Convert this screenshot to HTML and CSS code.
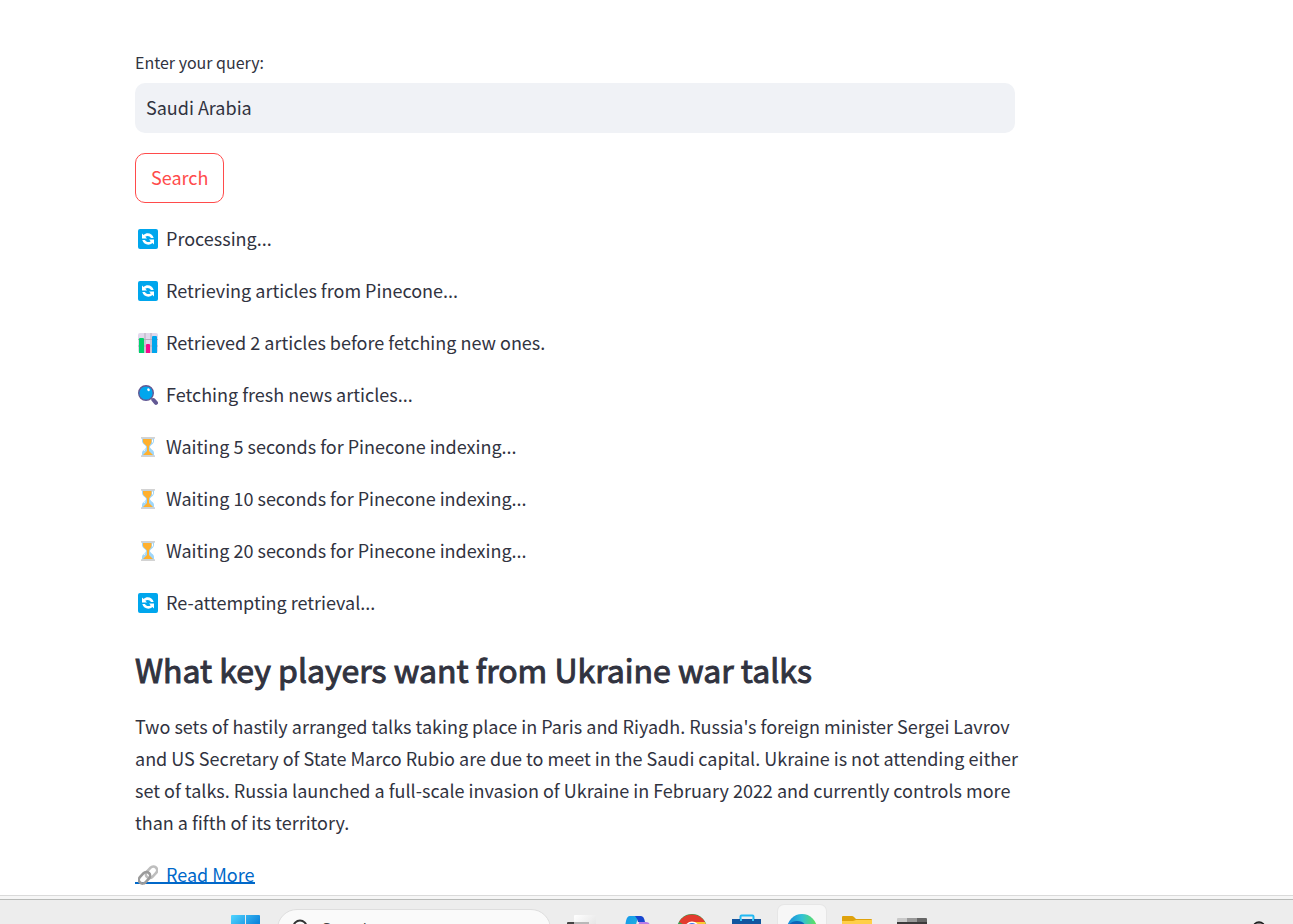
FILE: index.html
```html
<!DOCTYPE html>
<html lang="en">
<head>
<meta charset="utf-8">
<meta name="viewport" content="width=device-width, initial-scale=1">
<title>News search</title>
<link rel="stylesheet" href="styles.css">
</head>
<body>
<svg class="sprites" aria-hidden="true">
  <symbol id="refresh" viewBox="0 0 20 20">
    <rect width="20" height="20" rx="2" fill="#00a6ed"/>
    <path d="M4 4.500v5h5L7.300 7.800C9 6.300 11.800 6.600 13 9h2.700C14.500 4.500 9 2.800 5.600 6zM16 15.500v-5h-5l1.700 1.700c-1.700 1.500-4.500 1.200-5.700-1.200H4.300c1.200 4.500 6.700 6.200 10.100 3z" fill="#fff"/>
  </symbol>
  <symbol id="chart" viewBox="0 0 20 20">
    <rect width="20" height="20" rx="2" fill="#e1d8ec"/>
    <path d="M7 0v20M13 0v20M0 6.500h20M0 13h20" stroke="#b4acbc" stroke-width="1" fill="none"/>
    <path d="M1 20V6q0-1 1-1h3q1 0 1 1v14z" fill="#00d26a"/>
    <path d="M8 20v-8q0-1 1-1h2q1 0 1 1v8z" fill="#f70a8d"/>
    <path d="M14 20V4q0-1 1-1h3q1 0 1 1v16z" fill="#00a6ed"/>
  </symbol>
  <symbol id="lens" viewBox="0 0 20 20">
    <path d="M13 13l2.500 2.500" stroke="#9b9b9b" stroke-width="2"/>
    <path d="M15.500 15l2.500 2.800" stroke="#635994" stroke-width="4" stroke-linecap="round"/>
    <circle cx="8" cy="8" r="7.300" fill="#00a6ed" stroke="#635994" stroke-width="1.400"/>
    <ellipse cx="10.500" cy="4.800" rx="1.200" ry="1.500" fill="#fff" transform="rotate(-35 10.500 4.800)"/>
  </symbol>
  <symbol id="hourglass" viewBox="0 0 20 20">
    <path d="M4 1h12v3c0 3-4 4-4 6s4 3 4 6v3H4v-3c0-3 4-4 4-6S4 7 4 4z" fill="#9fd6fa"/>
    <path d="M5 2h8.500v2.500C13.500 7 11 8 11 10v4l4 4H5l4-4v-4C9 8 5 7 5 4.500z" fill="#ffb02e"/>
    <path d="M14.500 2.500v3M6 14q.5-1.500 1.500-2" stroke="#fff" fill="none"/>
    <path d="M3 0h14v1.700H3zM3 18.300h14V20H3z" fill="#d3d3d3"/>
  </symbol>
  <symbol id="link" viewBox="0 0 20 20">
    <g fill="none" stroke-width="2.600">
      <rect x="7" y="3.500" width="13" height="7.600" rx="3.800" transform="rotate(-47 13.500 7.300)" stroke="#bebebe"/>
      <rect x="0" y="9" width="13" height="7.600" rx="3.800" transform="rotate(-47 6.500 12.800)" stroke="#9b9b9b"/>
    </g>
  </symbol>
</svg>

<main class="page">
  <form class="query">
    <label class="query-label" for="query">Enter your query:</label>
    <input class="query-input" id="query" type="text" value="Saudi Arabia">
    <button class="query-button" type="button">Search</button>
  </form>
  <p class="line"><svg class="emoji"><use href="#refresh"/></svg>Processing...</p>
  <p class="line"><svg class="emoji"><use href="#refresh"/></svg>Retrieving articles from Pinecone...</p>
  <p class="line"><svg class="emoji"><use href="#chart"/></svg>Retrieved 2 articles before fetching new ones.</p>
  <p class="line"><svg class="emoji"><use href="#lens"/></svg>Fetching fresh news articles...</p>
  <p class="line"><svg class="emoji"><use href="#hourglass"/></svg>Waiting 5 seconds for Pinecone indexing...</p>
  <p class="line"><svg class="emoji"><use href="#hourglass"/></svg>Waiting 10 seconds for Pinecone indexing...</p>
  <p class="line"><svg class="emoji"><use href="#hourglass"/></svg>Waiting 20 seconds for Pinecone indexing...</p>
  <p class="line"><svg class="emoji"><use href="#refresh"/></svg>Re-attempting retrieval...</p>
  <article>
    <h2 class="title">What key players want from Ukraine war talks</h2>
    <p class="line">Two sets of hastily arranged talks taking place in Paris and Riyadh. Russia's foreign minister Sergei Lavrov and US Secretary of State Marco Rubio are due to meet in the Saudi capital. Ukraine is not attending either set of talks. Russia launched a full-scale invasion of Ukraine in February 2022 and currently controls more than a fifth of its territory.</p>
    <p class="line"><a class="more" href="#"><svg class="emoji"><use href="#link"/></svg>Read More</a></p>
  </article>
</main>

<footer class="taskbar">
  <button class="tile" type="button" aria-label="Start">
    <svg class="app" viewBox="0 0 30 30"><defs><linearGradient id="win" x2="1" y2="1"><stop stop-color="#50d5ff"/><stop offset=".6" stop-color="#0f86dc"/></linearGradient></defs><path d="M0 2q0-1 1-1h13v14H0zM15 1h13q1 0 1 1v13H15zM0 16h14v14H1q-1 0-1-1zM15 16h14v13q0 1-1 1H15z" fill="url(#win)"/></svg>
  </button>
  <label class="finder">
    <svg class="finder-icon" viewBox="0 0 20 20"><circle cx="8" cy="8" r="6.500"/><path d="M12.500 13l5 5"/></svg>
    <input class="finder-input" type="text" placeholder="Search" aria-label="Search">
  </label>
  <button class="tile" type="button" aria-label="Task view">
    <svg class="app" viewBox="0 0 30 30"><rect y="8" width="22" height="20" rx="1" fill="#444"/><defs><linearGradient id="view" x2="1" y2="1"><stop stop-color="#fff"/><stop offset="1" stop-color="#ddd"/></linearGradient></defs><rect x="7" y="1" width="22" height="20" rx="1" fill="url(#view)"/><path d="M7 8h15v13H7z" fill="#b8b8b8"/></svg>
  </button>
  <button class="tile" type="button" aria-label="Copilot">
    <svg class="app" viewBox="0 0 30 30"><defs><linearGradient id="cop" y2="1"><stop stop-color="#1694ee"/><stop offset="1" stop-color="#21c6d4"/></linearGradient></defs><path d="M8 2h11q-3 1-4 5l-4 14q-1 5-6 5H3q-3-2-1-8L4 7q1-5 4-5z" fill="url(#cop)"/><path d="M13 2h6q3 0 4 6h-7q-1-4-3-6z" fill="#1746cf"/><path d="M17 8h7q4 0 4 4l-4 13q-2 4-6 4h-8q4-1 5-5z" fill="#b87be8"/></svg>
  </button>
  <button class="tile" type="button" aria-label="Chrome">
    <svg class="app" viewBox="0 0 30 30"><circle cx="15" cy="15" r="15" fill="#35a352"/><path d="M2 8a15 15 0 0 1 26 0L15 15z" fill="#e33b2e"/><path d="M15 8h13a15 15 0 0 1-13 22l6-11z" fill="#fcc934"/><circle cx="15" cy="15" r="7.500" fill="#fff"/><circle cx="15" cy="15" r="6" fill="#3b7ded"/></svg>
  </button>
  <button class="tile" type="button" aria-label="Store">
    <svg class="app" viewBox="0 0 30 30"><path d="M8.500 7V2.500q0-1 1-1h11q1 0 1 1V7" fill="none" stroke="#20b9f4" stroke-width="2"/><path d="M0 5h29v21q0 3-3 3H3q-3 0-3-3z" fill="#12559f"/><path d="M8 5v2h2V5zM20 5v2h2V5z" fill="#36c7fa"/><path d="M9 11h5v5H9zM15 11h5v5h-5zM9 17h5v5H9zM15 17h5v5h-5z" fill="#fff"/></svg>
  </button>
  <button class="tile tile-active" type="button" aria-label="Edge">
    <svg class="app" viewBox="0 0 30 30"><defs><linearGradient id="edge"><stop stop-color="#1489dc"/><stop offset=".5" stop-color="#32c1d6"/><stop offset="1" stop-color="#62e452"/></linearGradient></defs><circle cx="15" cy="15" r="15" fill="url(#edge)"/><path d="M0 14q3-7 10-7 8 0 9 7-7 0-6 6 1 7 12 6-5 5-13 4Q0 26 0 14z" fill="#0c64b8"/></svg>
  </button>
  <button class="tile" type="button" aria-label="File Explorer">
    <svg class="app" viewBox="0 0 30 30"><path d="M0 3q0-1 1-1h9q1 0 2 1l2 2h15q1 0 1 1v8H0z" fill="#dfa20c"/><path d="M0 7h11l3-1h16v20q0 1-1 1H1q-1 0-1-1z" fill="#ffcf48"/></svg>
  </button>
  <button class="tile" type="button" aria-label="Video editor">
    <svg class="app" viewBox="0 0 30 30"><path d="M0 8h30v18q0 2-2 2H2q-2 0-2-2z" fill="#3b3b3b"/><path d="M0 8V5q0-1 1-1h9v4z" fill="#c9c9c9"/><path d="M10 4h10v4H10z" fill="#999"/><path d="M20 4h9q1 0 1 1v3H20z" fill="#666"/></svg>
  </button>
  <button class="tray" type="button" aria-label="Notifications">
    <svg class="tray-icon" viewBox="0 0 20 20"><path d="M4 15V9a6 6 0 0 1 12 0v6z" fill="#777" stroke="#1a1a1a" stroke-width="1.500"/></svg>
  </button>
</footer>
</body>
</html>
```
FILE: styles.css
```css
* {
  box-sizing: border-box;
}

body {
  display: flex;
  flex-direction: column;
  height: 100vh;
  margin: 0;
  overflow: hidden;
  background: #fff;
  color: #31333f;
  font-family: "Noto Sans CJK SC", "Open Sans", sans-serif;
  font-size: 18px;
  line-height: 32px;
}

button,
input {
  margin: 0;
  font: inherit;
}

.sprites {
  display: none;
}

.page {
  flex: none;
  width: 100%;
  max-width: 1023px;
  padding: 47px 0 5px 135px;
}

.query {
  display: flex;
  flex-direction: column;
  align-items: flex-start;
  max-width: 880px;
  margin-bottom: 19px;
}

.query-label {
  margin-bottom: 6px;
  font-size: 16px;
  line-height: 30px;
}

.query-input {
  width: 100%;
  height: 50px;
  margin-bottom: 20px;
  padding: 0 11px 2px;
  border: 0;
  border-radius: 10px;
  background: #f0f2f6;
  color: inherit;
}

.query-button {
  height: 50px;
  padding: 0 15px 2px;
  border: 1px solid #ff4b4b;
  border-radius: 10px;
  background: #fff;
  color: #ff4b4b;
}

.line {
  margin: 0 0 20px;
}

.line:last-child {
  margin-bottom: 0;
}

.emoji {
  width: 20px;
  height: 20px;
  margin: 0 8px 0 3px;
  vertical-align: -3px;
}

.title {
  margin: 0;
  padding: 10px 0 20px;
  font-size: 32px;
  font-weight: 400;
  line-height: 42px;
  -webkit-text-stroke: 1px currentColor;
}

.more {
  display: inline-block;
  background: linear-gradient(#0068c9, #0068c9) 0 24px / 100% 2px no-repeat;
  color: #0068c9;
  text-decoration: none;
  vertical-align: top;
}

.taskbar {
  display: flex;
  flex: none;
  align-items: center;
  gap: 7px;
  height: 64px;
  padding: 3px 24px 0 222px;
  border-top: 1px solid #dadada;
  background: linear-gradient(#f6f6f6 3px, #b8bab8 3px, #b8bab8 4px, #ededed 4px);
}

.tile {
  display: grid;
  flex: none;
  place-items: center;
  width: 48px;
  height: 48px;
  padding: 0;
  border: 0;
  border-radius: 6px;
  background: transparent;
}

.tile-active {
  background: #f7f7f7;
  box-shadow: 0 0 0 1px #e6e6e6;
}

.app {
  width: 30px;
  height: 30px;
}

.finder {
  display: flex;
  flex: none;
  align-items: center;
  gap: 10px;
  width: 274px;
  height: 40px;
  padding: 0 14px;
  border: 1px solid #dedede;
  border-radius: 20px;
  background: #fafafa;
}

.finder-icon {
  flex: none;
  width: 20px;
  height: 20px;
  fill: none;
  stroke: #333;
  stroke-width: 2;
}

.finder-input {
  width: 100%;
  padding: 0;
  border: 0;
  background: transparent;
  font-family: "Open Sans", sans-serif;
  font-size: 16px;
  line-height: 24px;
}

.finder-input::placeholder {
  color: #444;
}

.tray {
  width: 20px;
  height: 20px;
  margin-left: auto;
  padding: 0;
  border: 0;
  background: transparent;
}

.tray-icon {
  display: block;
  width: 20px;
  height: 20px;
}
```
